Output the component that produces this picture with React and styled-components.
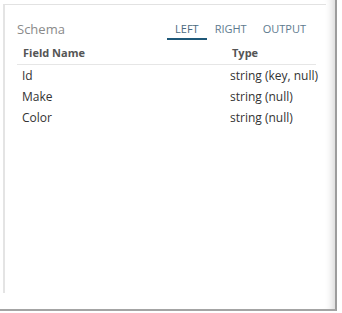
import styled, { createGlobalStyle } from "styled-components";

const GlobalStyle = createGlobalStyle`
  body {
    margin: 0;
    background: #fff;
    font-family: "Open Sans", "Noto Sans", sans-serif;
  }
`;

const Frame = styled.div`
  width: 335px;
  height: 309px;
  display: flex;
  flex-direction: column;
  border-right: 2px solid #9c9c9c;
  border-bottom: 2px solid #a4a4a4;
  box-shadow: inset -10px 0 8px -8px rgba(0, 0, 0, 0.18);
`;

const Panel = styled.div`
  margin: 4px 9px 0 3px;
  height: 288px;
  border-top: 1px solid #e2e2e2;
  border-left: 2px solid #e4e4e4;
  padding: 0 10px 0 12px;
  display: flex;
  flex-direction: column;
`;

const TopBar = styled.div`
  display: flex;
  align-items: flex-end;
  justify-content: space-between;
  height: 35px;
`;

const Title = styled.div`
  font-size: 13px;
  color: #8a8a8a;
  padding-bottom: 2px;
`;

const Tabs = styled.div`
  display: flex;
  margin-right: 2px;
`;

const Tab = styled.div`
  font-size: 11px;
  color: ${(p) => (p.$active ? "#4b6a80" : "#5e7a8e")};
  padding: 0 8px 2px;
  border-bottom: 2px solid ${(p) => (p.$active ? "#1e5878" : "transparent")};
`;

const Table = styled.div`
  display: flex;
  flex-direction: column;
`;

const Row = styled.div`
  display: grid;
  grid-template-columns: 208px 1fr;
  align-items: center;
  height: ${(p) => (p.$head ? "24px" : "21px")};
  padding-left: ${(p) => (p.$head ? "6px" : "5px")};
  border-bottom: ${(p) => (p.$head ? "1px solid #e6e6e6" : "none")};
  font-size: ${(p) => (p.$head ? "11px" : "12px")};
  font-weight: ${(p) => (p.$head ? 700 : 400)};
  color: ${(p) => (p.$head ? "#555" : "#333")};
`;

const Cell = styled.div`
  white-space: nowrap;
  padding-left: ${(p) => p.$pad || 0}px;
`;

const fields = [
  { name: "Id", type: "string (key, null)" },
  { name: "Make", type: "string (null)" },
  { name: "Color", type: "string (null)" },
];

export default function App() {
  return (
    <>
      <GlobalStyle />
      <Frame>
        <Panel>
          <TopBar>
            <Title>Schema</Title>
            <Tabs>
              <Tab $active>LEFT</Tab>
              <Tab>RIGHT</Tab>
              <Tab>OUTPUT</Tab>
            </Tabs>
          </TopBar>
          <Table>
            <Row $head>
              <Cell>Field Name</Cell>
              <Cell $pad={1}>Type</Cell>
            </Row>
            {fields.map((f) => (
              <Row key={f.name}>
                <Cell>{f.name}</Cell>
                <Cell>{f.type}</Cell>
              </Row>
            ))}
          </Table>
        </Panel>
      </Frame>
    </>
  );
}
